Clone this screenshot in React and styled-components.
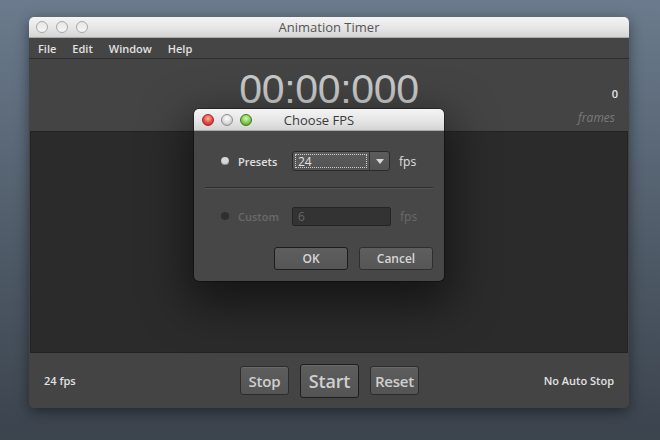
import React from "react";
import styled, { createGlobalStyle } from "styled-components";

const GlobalStyle = createGlobalStyle`
  html, body {
    margin: 0;
    padding: 0;
    width: 660px;
    height: 440px;
    overflow: hidden;
    background: linear-gradient(180deg, #6b7b8d 0%, #4f5b68 55%, #3b434d 100%);
    font-family: "Open Sans", "DejaVu Sans", sans-serif;
  }
`;

const Desktop = styled.div`
  width: 660px;
  height: 440px;
  padding: 17px 0 0 29px;
  box-sizing: border-box;
`;

const Window = styled.div`
  position: relative;
  width: 600px;
  height: 391px;
  display: flex;
  flex-direction: column;
  border-radius: 5px;
  background: #444444;
  box-shadow: 0 4px 14px rgba(0, 0, 0, 0.45);
`;

const TitleBar = styled.div`
  position: relative;
  height: ${(p) => p.$h || 21}px;
  flex: none;
  display: flex;
  align-items: center;
  justify-content: center;
  background: linear-gradient(180deg, #f4f4f4 0%, #e4e4e4 60%, #d4d4d4 100%);
  border-radius: 5px 5px 0 0;
  border-bottom: 1px solid #a9a9a9;
  box-sizing: border-box;
  font-size: 13px;
  color: ${(p) => p.$color || "#555"};
`;

const Lights = styled.div`
  position: absolute;
  left: ${(p) => p.$left}px;
  top: 0;
  bottom: 0;
  display: flex;
  align-items: center;
  gap: ${(p) => p.$gap}px;
`;

const Light = styled.span`
  width: ${(p) => p.$size}px;
  height: ${(p) => p.$size}px;
  border-radius: 50%;
  box-sizing: border-box;
  border: 1px solid ${(p) => p.$border};
  background: ${(p) => p.$bg};
`;

const MenuBar = styled.div`
  height: 20px;
  flex: none;
  display: flex;
  align-items: center;
  gap: 16px;
  padding-left: 9px;
  background: #454545;
  border-bottom: 1px solid #2e2e2e;
  font-size: 11px;
  font-weight: 600;
  color: #e2e2e2;
`;

const TimerArea = styled.div`
  height: 72px;
  flex: none;
  display: grid;
  grid-template-columns: 1fr auto 1fr;
  align-items: center;
  padding: 0 14px;
  background: #444444;
`;

const TimeText = styled.div`
  font-family: "Liberation Sans", Arial, sans-serif;
  font-size: 41px;
  color: #c9c9c9;
  letter-spacing: -0.3px;
  margin-top: -12px;
`;

const Counter = styled.div`
  justify-self: end;
  display: flex;
  flex-direction: column;
  align-items: flex-end;
  gap: 8px;
  margin-top: 22px;
`;

const Count = styled.span`
  font-size: 11px;
  font-weight: 600;
  color: #e6e6e6;
  margin-right: -3px;
`;

const Frames = styled.span`
  font-size: 12px;
  font-style: italic;
  color: #7a7a7a;
`;

const Stage = styled.div`
  flex: 1;
  margin: 0 1px;
  background: #2b2b2b;
  border: 1px solid #232323;
`;

const BottomBar = styled.div`
  height: 55px;
  flex: none;
  display: grid;
  grid-template-columns: 1fr auto 1fr;
  align-items: center;
  padding: 0 15px;
  border-radius: 0 0 5px 5px;
  background: #444444;
  font-size: 11px;
  font-weight: 600;
  color: #e2e2e2;
`;

const Controls = styled.div`
  display: flex;
  align-items: center;
  gap: 11px;
  margin-left: 1px;
`;

const Right = styled.span`
  justify-self: end;
`;

const PushButton = styled.button`
  width: ${(p) => p.$w}px;
  height: ${(p) => p.$h}px;
  padding: 0;
  border-radius: 3px;
  border: 1px solid ${(p) => (p.$primary ? "#1d1d1d" : "#2c2c2c")};
  background: linear-gradient(180deg, #5d5d5d 0%, #545454 100%);
  box-shadow: inset 0 1px 0 rgba(255, 255, 255, 0.08);
  color: #cfcfcf;
  font-family: "Open Sans", "DejaVu Sans", sans-serif;
  font-size: ${(p) => p.$fs}px;
  font-weight: 600;
  letter-spacing: -0.2px;
`;

const Dialog = styled.div`
  position: absolute;
  left: 165px;
  top: 92px;
  width: 250px;
  height: 172px;
  display: flex;
  flex-direction: column;
  border-radius: 5px;
  background: #474747;
  box-shadow: 0 16px 44px 8px rgba(0, 0, 0, 0.5), 0 0 0 1px rgba(0, 0, 0, 0.35);
`;

const DialogBody = styled.div`
  flex: 1;
  display: flex;
  flex-direction: column;
  padding: 20px 11px 0 11px;
`;

const Row = styled.div`
  height: 20px;
  display: flex;
  align-items: center;
  padding-left: 16px;
  color: ${(p) => (p.$disabled ? "#6a6a6a" : "#e0e0e0")};
  font-size: 11px;
  font-weight: 600;
`;

const Radio = styled.span`
  width: 8px;
  height: 8px;
  border-radius: 50%;
  background: ${(p) => (p.$disabled ? "#2f2f2f" : "#d8d8d8")};
  box-shadow: ${(p) => (p.$disabled ? "none" : "inset 0 -1px 1px rgba(0,0,0,0.35)")};
  margin-right: 9px;
  margin-top: -1px;
`;

const RowLabel = styled.span`
  width: 54px;
`;

const Select = styled.div`
  width: 98px;
  height: 20px;
  display: flex;
  box-sizing: border-box;
  border: 1px solid #2a2a2a;
  border-radius: 3px;
  background: linear-gradient(180deg, #5c5c5c 0%, #535353 100%);
  overflow: hidden;
`;

const SelectValue = styled.div`
  flex: 1;
  margin: 2px;
  padding-left: 2px;
  display: flex;
  align-items: center;
  border: 1px dotted #d0d0d0;
  font-size: 12px;
  font-weight: 400;
  color: #e0e0e0;
`;

const SelectArrow = styled.div`
  width: 19px;
  display: flex;
  align-items: center;
  justify-content: center;
  border-left: 1px solid #363636;
`;

const Field = styled.div`
  width: 99px;
  height: 19px;
  box-sizing: border-box;
  padding-left: 5px;
  display: flex;
  align-items: center;
  border: 1px solid #242424;
  border-radius: 2px;
  background: #333333;
  font-size: 12px;
  font-weight: 400;
  color: #666;
`;

const Unit = styled.span`
  margin-left: 9px;
  font-size: 12px;
  font-weight: 400;
`;

const Separator = styled.div`
  height: 1px;
  margin: 16px 0 18px 0;
  background: #2d2d2d;
  box-shadow: 0 1px 0 #555;
`;

const DialogButtons = styled.div`
  margin-top: 21px;
  display: flex;
  justify-content: flex-end;
  gap: 11px;
`;

const DialogButton = styled.button`
  width: 74px;
  height: 23px;
  padding: 0;
  border-radius: 3px;
  border: 1px solid ${(p) => (p.$default ? "#1c1c1c" : "#2e2e2e")};
  background: linear-gradient(180deg, #5e5e5e 0%, #565656 100%);
  color: #d6d6d6;
  font-family: "Open Sans", "DejaVu Sans", sans-serif;
  font-size: 12px;
  font-weight: 600;
`;

const grey = { $bg: "linear-gradient(180deg,#e6e6e6,#f6f6f6)", $border: "#a8a8a8" };

export default function App() {
  return (
    <>
      <GlobalStyle />
      <Desktop>
        <Window>
          <TitleBar>
            <Lights $left={7} $gap={8}>
              <Light $size={12} {...grey} />
              <Light $size={12} {...grey} />
              <Light $size={12} {...grey} />
            </Lights>
            Animation Timer
          </TitleBar>
          <MenuBar>
            <span>File</span>
            <span>Edit</span>
            <span>Window</span>
            <span>Help</span>
          </MenuBar>
          <TimerArea>
            <span />
            <TimeText>00:00:000</TimeText>
            <Counter>
              <Count>0</Count>
              <Frames>frames</Frames>
            </Counter>
          </TimerArea>
          <Stage />
          <BottomBar>
            <span>24 fps</span>
            <Controls>
              <PushButton $w={49} $h={29} $fs={15}>Stop</PushButton>
              <PushButton $w={59} $h={34} $fs={18} $primary>Start</PushButton>
              <PushButton $w={49} $h={29} $fs={15}>Reset</PushButton>
            </Controls>
            <Right>No Auto Stop</Right>
          </BottomBar>

          <Dialog>
            <TitleBar $h={22} $color="#3a3a3a">
              <Lights $left={8} $gap={7}>
                <Light $size={12} $bg="radial-gradient(circle at 50% 35%, #ffb3ad 0%, #e8453c 55%, #b5231c 100%)" $border="#9c2a24" />
                <Light $size={12} $bg="radial-gradient(circle at 50% 35%, #ffffff 0%, #d6d6d6 60%, #a9a9a9 100%)" $border="#8e8e8e" />
                <Light $size={12} $bg="radial-gradient(circle at 50% 35%, #d8f7b6 0%, #7fcb4b 55%, #3f9421 100%)" $border="#3f7a28" />
              </Lights>
              Choose FPS
            </TitleBar>
            <DialogBody>
              <Row>
                <Radio />
                <RowLabel>Presets</RowLabel>
                <Select>
                  <SelectValue>24</SelectValue>
                  <SelectArrow>
                    <svg width="8" height="5" viewBox="0 0 8 5">
                      <path d="M0 0h8L4 5z" fill="#d8d8d8" />
                    </svg>
                  </SelectArrow>
                </Select>
                <Unit>fps</Unit>
              </Row>
              <Separator />
              <Row $disabled>
                <Radio $disabled />
                <RowLabel>Custom</RowLabel>
                <Field>6</Field>
                <Unit>fps</Unit>
              </Row>
              <DialogButtons>
                <DialogButton $default>OK</DialogButton>
                <DialogButton>Cancel</DialogButton>
              </DialogButtons>
            </DialogBody>
          </Dialog>
        </Window>
      </Desktop>
    </>
  );
}
